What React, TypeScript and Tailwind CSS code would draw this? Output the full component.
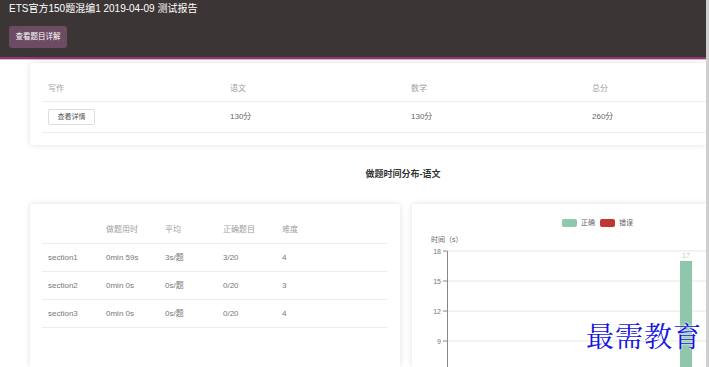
import React from "react";

const Card = ({ className = "", children }: { className?: string; children?: React.ReactNode }) => (
  <div className={"bg-white rounded-[3px] shadow-[0_0_6px_rgba(0,0,0,0.12)] " + className}>{children}</div>
);

export default function App() {
  const rows = [
    ["section1", "0min 59s", "3s/题", "3/20", "4"],
    ["section2", "0min 0s", "0s/题", "0/20", "3"],
    ["section3", "0min 0s", "0s/题", "0/20", "4"],
  ];
  const ticks = [18, 15, 12, 9];
  return (
    <div className="relative w-[709px] h-[367px] overflow-hidden bg-white flex font-['Liberation_Sans','Noto_Sans_CJK_SC',sans-serif]">
      <div className="flex-1 min-w-0 flex flex-col">
        <div className="h-[57px] bg-[#3b3635] px-[9px] pt-[2px] shrink-0">
          <div className="text-[10px] leading-[14px] text-white">ETS官方150题混编1 2019-04-09 测试报告</div>
          <div className="mt-[10px] w-[58px] h-[22px] rounded-[3px] bg-[#6d4b63] text-white text-[7.5px] flex items-center justify-center">
            查看题目详解
          </div>
        </div>
        <div className="h-[2px] bg-[#8c3a70] shrink-0" />
        <div className="h-[1px] bg-[#e7b3d0] shrink-0" />

        <div className="pl-[30px] pt-[3px]">
          <Card className="rounded-r-none pt-[13px] pb-[12px] pl-[12px]">
            <div className="grid grid-cols-[181px_181px_181px_1fr] h-[26px] items-center border-b border-[#eeeeee] text-[8px] text-[#a0a0a0]">
              <div className="pl-[6px]">写作</div>
              <div className="pl-[7px]">语文</div>
              <div className="pl-[7px]">数学</div>
              <div className="pl-[7px]">总分</div>
            </div>
            <div className="grid grid-cols-[181px_181px_181px_1fr] h-[31px] items-center border-b border-[#eeeeee] text-[8px] text-[#666]">
              <div className="pl-[6px]">
                <div className="w-[47px] h-[16px] border border-[#dddddd] rounded-[2px] flex items-center justify-center text-[7px] text-[#555]">
                  查看详情
                </div>
              </div>
              <div className="pl-[7px]">130分</div>
              <div className="pl-[7px]">130分</div>
              <div className="pl-[7px]">260分</div>
            </div>
          </Card>
        </div>

        <div className="h-[59px] flex items-center justify-center pl-[100px] text-[9px] font-bold text-[#333]">
          做题时间分布-语文
        </div>

        <div className="flex gap-[12px] pl-[30px] flex-1">
          <Card className="w-[370px] shrink-0 pt-[12px] px-[12px] rounded-b-none">
            <div className="grid grid-cols-[58px_59px_58px_59px_1fr] h-[28px] items-center border-b border-[#eeeeee] text-[8px] text-[#a0a0a0]">
              <div />
              <div className="pl-[6px]">做题用时</div>
              <div className="pl-[6px]">平均</div>
              <div className="pl-[6px]">正确题目</div>
              <div className="pl-[6px]">难度</div>
            </div>
            {rows.map((r) => (
              <div key={r[0]} className="grid grid-cols-[58px_59px_58px_59px_1fr] h-[28px] items-center border-b border-[#eeeeee] text-[8px] text-[#777]">
                {r.map((c, i) => (
                  <div key={i} className="pl-[6px]">{c}</div>
                ))}
              </div>
            ))}
          </Card>
          <Card className="flex-1 rounded-r-none rounded-b-none pt-[14px] flex flex-col">
            <div className="h-[10px] flex items-center gap-[4px] pl-[150px] text-[7px] text-[#666]">
              <div className="w-[15px] h-[8px] rounded-[2px] bg-[#90c8ad]" />
              <span>正确</span>
              <div className="ml-[1px] w-[15px] h-[8px] rounded-[2px] bg-[#c23531]" />
              <span>错误</span>
            </div>
            <div className="mt-[6px] h-[12px] pl-[19px] flex items-center text-[7px] text-[#666]">时间（s）</div>
            <svg width="297" height="121" className="block">
              {ticks.map((t, i) => (
                <g key={t}>
                  <line x1="35" x2="297" y1={5 + i * 30} y2={5 + i * 30} stroke="#e6e6e6" strokeWidth="1" />
                  <line x1="31" x2="35" y1={5 + i * 30} y2={5 + i * 30} stroke="#888" strokeWidth="1" />
                  <text x="29" y={5 + i * 30 + 2.5} textAnchor="end" fontSize="7" fill="#777" fontFamily="Liberation Sans, sans-serif">
                    {t}
                  </text>
                </g>
              ))}
              <line x1="35.5" x2="35.5" y1="5" y2="121" stroke="#888" strokeWidth="1" />
              <rect x="268" y="15" width="12" height="110" fill="#8fc7ac" />
              <text x="274" y="12" textAnchor="middle" fontSize="7" fill="#a8d3bd" fontFamily="Liberation Sans, sans-serif">
                17
              </text>
            </svg>
          </Card>
        </div>
      </div>
      <div className="w-[3px] bg-[#cfcfcf] shrink-0" />

      <div className="absolute left-[586px] top-[318px] text-[28px] leading-[34px] tracking-[1px] text-[#1414e0] font-['Noto_Serif_CJK_SC','AR_PL_UKai_CN','Noto_Sans_CJK_SC',serif] [text-shadow:0_0_2px_#fff,0_0_2px_#fff]">
        最需教育
      </div>
    </div>
  );
}
